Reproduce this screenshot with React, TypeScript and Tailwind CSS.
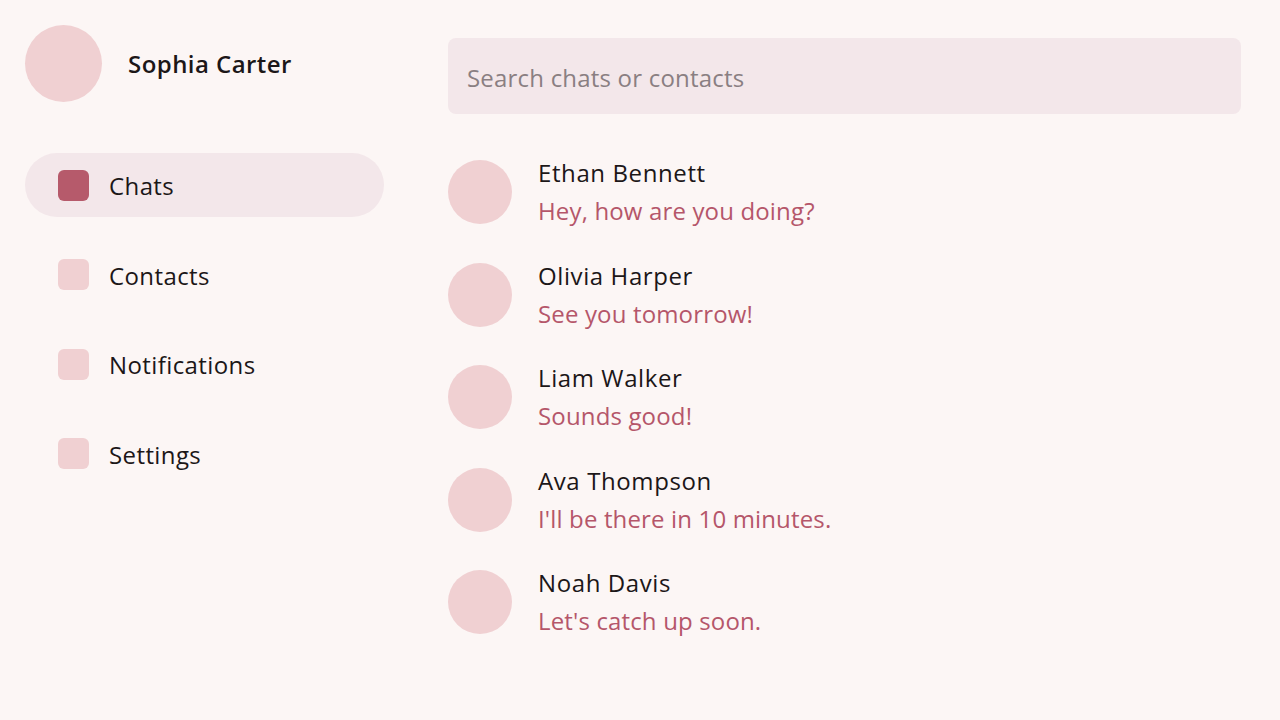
import React from "react";

const navItems = ["Chats", "Contacts", "Notifications", "Settings"];

const chats = [
  { name: "Ethan Bennett", message: "Hey, how are you doing?" },
  { name: "Olivia Harper", message: "See you tomorrow!" },
  { name: "Liam Walker", message: "Sounds good!" },
  { name: "Ava Thompson", message: "I'll be there in 10 minutes." },
  { name: "Noah Davis", message: "Let's catch up soon." },
];

const App = () => {
  return (
    <div
      className="flex min-h-[720px] w-full bg-[#fcf6f5] text-[#1c1718]"
      style={{ fontFamily: '"Open Sans", "Noto Sans", sans-serif' }}
    >
      <aside className="flex w-[384px] shrink-0 flex-col pl-[25px] pt-[25px]">
        <div className="flex items-center gap-[26px]">
          <div className="h-[77px] w-[77px] rounded-full bg-[#f0d0d2]" />
          <span className="text-[24px] font-semibold leading-8 tracking-[0.45px]">Sophia Carter</span>
        </div>
        <nav className="mt-[51px] flex flex-col gap-[25.5px]">
          {navItems.map((item, i) => (
            <div
              key={item}
              className={`flex h-[64px] items-center gap-[20px] rounded-full pl-[33px] ${
                i === 0 ? "bg-[#f3e7ea]" : ""
              }`}
            >
              <div
                className={`h-[31px] w-[31px] rounded-[6px] ${
                  i === 0 ? "bg-[#b65a6b]" : "bg-[#f0d0d2]"
                }`}
              />
              <span className="pt-[2px] text-[24px] leading-8 tracking-[0.4px]">{item}</span>
            </div>
          ))}
        </nav>
      </aside>
      <main className="flex flex-1 flex-col pl-[64px] pr-[39px] pt-[38px]">
        <div className="flex h-[76px] items-center rounded-[8px] bg-[#f3e7ea] px-[19px]">
          <span className="pt-[3px] text-[24px] tracking-[0.2px] text-[#8a7f82]">
            Search chats or contacts
          </span>
        </div>
        <div className="mt-[43px] flex flex-col gap-[32.5px]">
          {chats.map((chat) => (
            <div key={chat.name} className="flex items-center gap-[26px]">
              <div className="h-[64px] w-[64px] shrink-0 rounded-full bg-[#f0d0d2]" />
              <div className="flex flex-col gap-[6px]">
                <span className="text-[24px] leading-8 tracking-[0.6px]">{chat.name}</span>
                <span className="text-[24px] leading-8 tracking-[0.15px] text-[#b5566a]">
                  {chat.message}
                </span>
              </div>
            </div>
          ))}
        </div>
      </main>
    </div>
  );
};

export default App;
